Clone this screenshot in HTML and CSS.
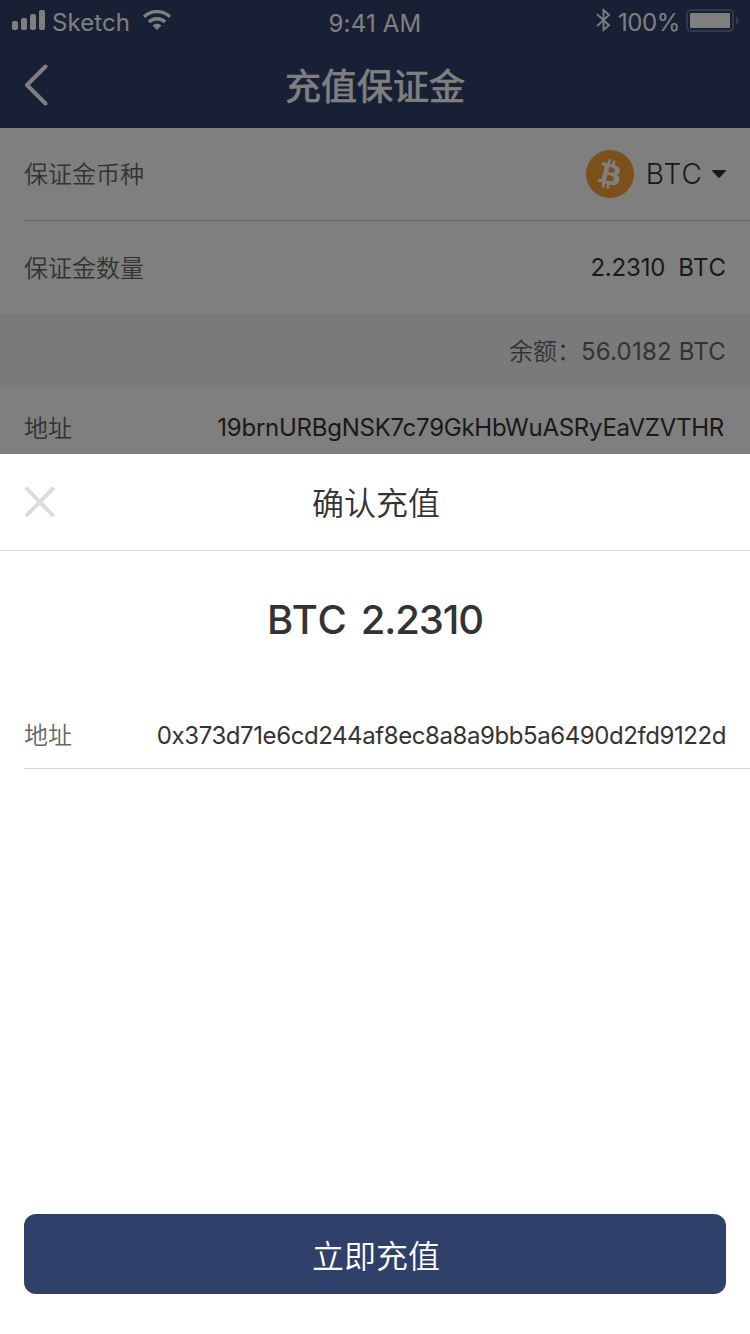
FILE: index.html
```html
<!DOCTYPE html>
<html lang="zh-CN">
<head>
<meta charset="utf-8">
<title>充值保证金</title>
<link rel="stylesheet" href="styles.css">
</head>
<body>
<div class="screen">
  <div class="page">
    <header class="header">
      <div class="status">
        <div class="status-left">
          <svg class="signal" width="34" height="20" viewBox="0 0 34 20" fill="#fff"><rect x="0" y="11" width="6" height="9" rx="2"/><rect x="9" y="8" width="6" height="12" rx="2"/><rect x="18" y="4" width="6" height="16" rx="2"/><rect x="27" y="0" width="6" height="20" rx="2"/></svg>
          <span class="carrier">Sketch</span>
          <svg class="wifi" width="28" height="20" viewBox="0 0 28 20"><g fill="none" stroke="#fff" stroke-width="3.4"><path d="M1 6.800C8.300-.1 19.700-.1 27 6.800"/><path d="M5.900 12C10.500 7.600 17.500 7.600 22.100 12"/></g><path fill="#fff" d="M9.500 15.500C12.100 13.200 15.900 13.200 18.500 15.500L14 20Z"/></svg>
        </div>
        <span class="time">9:41 AM</span>
        <div class="status-right">
          <svg class="bluetooth" width="15" height="24" viewBox="0 0 15 24" fill="none" stroke="#fff" stroke-width="1.800"><path d="M1 6.200L13 17.300L7.500 22V2L13 7L1 18.200"/></svg>
          <span class="percent">100%</span>
          <svg class="battery" width="53" height="23" viewBox="0 0 53 23"><rect x="1" y="1" width="46" height="21" rx="4" fill="none" stroke="#fff" stroke-opacity=".25" stroke-width="2"/><rect x="4" y="4" width="40" height="15" rx="1" fill="#fff"/><path d="M50 7.500C53.700 9 53.700 14 50 15.500Z" fill="#fff" fill-opacity=".3"/></svg>
        </div>
      </div>
      <div class="nav">
        <svg class="back" width="24" height="42" viewBox="0 0 24 42" fill="none" stroke="#fff" stroke-width="4" stroke-linecap="round" stroke-linejoin="round"><path d="M21.500 2.500L3 21L21.500 39.500"/></svg>
        <h1 class="title">充值保证金</h1>
      </div>
    </header>
    <div class="row row-coin">
      <span class="label">保证金币种</span>
      <div class="coin">
        <svg width="48" height="48" viewBox="0 0 32 32"><circle cx="16" cy="16" r="16" fill="#f7a034"/><path fill="#fff" transform="translate(-.6 0)" d="M23.189 14.020c.314-2.096-1.283-3.223-3.465-3.975l.708-2.840-1.728-.430-.690 2.765c-.454-.114-.920-.220-1.385-.326l.695-2.783L15.596 6l-.708 2.839c-.376-.086-.746-.170-1.104-.260l.002-.009-2.384-.595-.460 1.846s1.283.294 1.256.312c.700.175.826.638.805 1.006l-.806 3.235c.048.012.110.030.180.057l-.183-.045-1.130 4.532c-.086.212-.303.531-.793.410.018.025-1.256-.313-1.256-.313l-.858 1.978 2.250.561c.418.105.828.215 1.231.318l-.715 2.872 1.727.430.708-2.840c.472.127.930.245 1.378.357l-.706 2.828 1.728.430.715-2.866c2.948.558 5.164.333 6.097-2.333.752-2.146-.037-3.385-1.588-4.192 1.130-.260 1.980-1.003 2.207-2.538zm-3.950 5.538c-.533 2.147-4.148.986-5.320.695l.950-3.805c1.172.293 4.929.872 4.370 3.110zm.535-5.569c-.487 1.953-3.495.960-4.470.717l.860-3.450c.975.243 4.118.696 3.610 2.733z"/></svg>
        <span class="coin-name">BTC</span>
        <svg class="caret" width="14" height="9" viewBox="0 0 14 9"><path d="M1.200 0H12.800Q14.500.1 13.500 1.500L8 7.300Q7 8.600 6 7.300L.5 1.500Q-.5.1 1.200 0Z" fill="#333"/></svg>
      </div>
    </div>
    <div class="row row-amount">
      <span class="label">保证金数量</span>
      <span class="value amount">2.2310<span class="unit">BTC</span></span>
    </div>
    <div class="balance"><span class="balance-label">余额：</span><span class="balance-value">56.0182 BTC</span></div>
    <div class="row row-address">
      <span class="label">地址</span>
      <span class="value address">19brnURBgNSK7c79GkHbWuASRyEaVZVTHR</span>
    </div>
    <div class="mask"></div>
  </div>
  <section class="sheet">
    <header class="sheet-header">
      <svg class="close" width="31" height="30" viewBox="0 0 31 30" stroke="#dcdcdc" stroke-width="4" stroke-linecap="round"><path d="M3 2L28.500 28M28.500 2L3 28"/></svg>
      <h2 class="sheet-title">确认充值</h2>
    </header>
    <div class="total"><span class="total-unit">BTC</span><span class="total-value">2.2310</span></div>
    <div class="detail">
      <span class="label">地址</span>
      <span class="value hash">0x373d71e6cd244af8ec8a8a9bb5a6490d2fd9122d</span>
    </div>
    <button class="submit">立即充值</button>
  </section>
</div>
</body>
</html>
```
FILE: styles.css
```css
* { box-sizing: border-box; }
body {
  margin: 0;
  font-family: Inter, "Noto Sans CJK SC", sans-serif;
  font-weight: 400;
  color: #333;
  background: #fff;
}
svg { display: block; flex: none; }
h1, h2 { margin: 0; font-weight: 350; }
span { white-space: nowrap; }
.screen { width: 750px; height: 1334px; display: flex; flex-direction: column; overflow: hidden; }
.page { position: relative; height: 454px; flex: none; overflow: hidden; }
.mask { position: absolute; inset: 0; background: rgba(0, 0, 0, .5); }

.header { height: 128px; background: #2f406a; color: #fff; }
.status {
  height: 40px;
  display: grid;
  grid-template-columns: 1fr auto 1fr;
  padding: 0 12px;
  font-size: 24px;
  line-height: 30px;
}
.status-left, .status-right { display: flex; align-items: flex-start; }
.status-right { justify-content: flex-end; }
.signal { margin-top: 10px; }
.carrier { width: 78px; margin: 8px 0 0 6px; letter-spacing: .1px; }
.wifi { margin: 10px 0 0 13px; }
.time { margin-top: 9px; letter-spacing: .2px; }
.bluetooth { margin-top: 8px; }
.percent { margin: 8px 6px 0 7px; letter-spacing: -.4px; }
.battery { margin: 9px -1px 0 0; }
.nav {
  height: 88px;
  display: grid;
  grid-template-columns: 100px 1fr 100px;
}
.back { margin: 24px 0 0 24px; }
.title {
  font-size: 36px;
  font-weight: 400;
  line-height: 52px;
  margin-top: 21px;
  text-align: center;
  -webkit-text-stroke: .7px currentColor;
}

.row { display: flex; align-items: center; justify-content: space-between; padding-right: 24px; margin-left: 24px; }
.label { font-size: 24px; font-weight: 350; color: #666; line-height: 36px; padding-top: 1px; }
.value { font-size: 24px; line-height: 36px; }
.row-coin { height: 93px; border-bottom: 1px solid #c8c8c8; }
.coin { display: flex; align-items: center; }
.coin-name { font-size: 28px; font-weight: 300; letter-spacing: 1.1px; margin: 0 9px 0 12px; }
.row-amount { height: 93px; }
.row-amount .label { padding-top: 3px; }
.amount { letter-spacing: -.2px; }
.unit { margin-left: 13px; letter-spacing: .6px; margin-right: -.6px; }
.balance {
  height: 74px;
  display: flex;
  align-items: center;
  justify-content: flex-end;
  padding-right: 24px;
  background: #f5f5f5;
  color: #666;
  font-size: 24px;
}
.balance-label { font-weight: 350; margin-bottom: 3px; }
.balance-value { letter-spacing: .2px; }
.row-address { height: 80px; }
.address { margin-right: 2px; letter-spacing: -.26px; }

.sheet { flex: 1; display: flex; flex-direction: column; background: #fff; }
.sheet-header {
  height: 97px;
  display: grid;
  grid-template-columns: 100px 1fr 100px;
  align-items: center;
  border-bottom: 1px solid #dcdcdc;
}
.close { margin-left: 24px; }
.sheet-title { font-size: 32px; text-align: center; padding: 0 0 2px 2px; }
.total {
  height: 138px;
  display: flex;
  justify-content: center;
  gap: 13px;
  line-height: 138px;
  font-size: 40px;
  font-weight: 500;
}
.total-unit { letter-spacing: .8px; }
.total-value { letter-spacing: -1.1px; }
.detail {
  height: 80px;
  display: flex;
  align-items: center;
  justify-content: space-between;
  margin-left: 24px;
  padding: 14px 24px 0 0;
  border-bottom: 1px solid #dcdcdc;
}
.hash { letter-spacing: -.42px; }
.submit {
  height: 80px;
  margin: auto 24px 40px;
  padding: 6px 0 0 2px;
  border: 0;
  border-radius: 12px;
  background: #2f406a;
  color: #fff;
  font: 350 32px/74px Inter, "Noto Sans CJK SC", sans-serif;
}
```
